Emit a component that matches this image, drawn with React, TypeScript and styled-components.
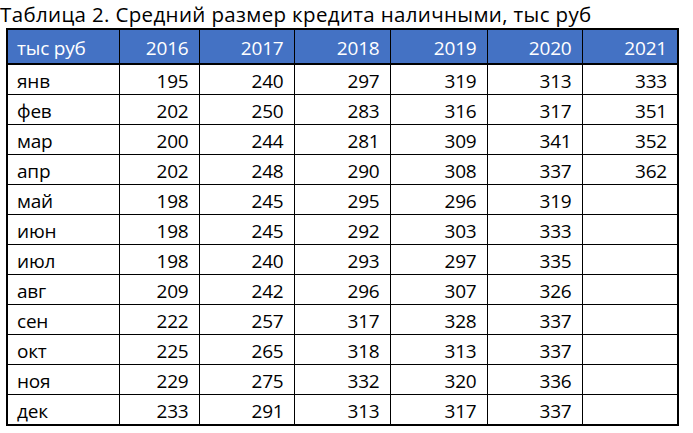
import React from "react";
import styled, { createGlobalStyle } from "styled-components";

const GlobalStyle = createGlobalStyle`
  html, body {
    margin: 0;
    padding: 0;
    background: #ffffff;
  }
  body {
    font-family: "Open Sans", "Noto Sans", sans-serif;
    color: #000;
  }
`;

const years = ["2016", "2017", "2018", "2019", "2020", "2021"];

const rows: [string, (number | null)[]][] = [
  ["янв", [195, 240, 297, 319, 313, 333]],
  ["фев", [202, 250, 283, 316, 317, 351]],
  ["мар", [200, 244, 281, 309, 341, 352]],
  ["апр", [202, 248, 290, 308, 337, 362]],
  ["май", [198, 245, 295, 296, 319, null]],
  ["июн", [198, 245, 292, 303, 333, null]],
  ["июл", [198, 240, 293, 297, 335, null]],
  ["авг", [209, 242, 296, 307, 326, null]],
  ["сен", [222, 257, 317, 328, 337, null]],
  ["окт", [225, 265, 318, 313, 337, null]],
  ["ноя", [229, 275, 332, 320, 336, null]],
  ["дек", [233, 291, 313, 317, 337, null]],
];

const colWidths = [112, 80, 95, 96, 97, 95, 96];

function App() {
  return (
    <Page>
      <GlobalStyle />
      <Title>Таблица 2. Средний размер кредита наличными, тыс руб</Title>
      <Table>
        <colgroup>
          {colWidths.map((w, i) => (
            <col key={i} style={{ width: w }} />
          ))}
        </colgroup>
        <thead>
          <tr>
            <HeadCell $left>тыс руб</HeadCell>
            {years.map((y) => (
              <HeadCell key={y}>{y}</HeadCell>
            ))}
          </tr>
        </thead>
        <tbody>
          {rows.map(([month, vals]) => (
            <Row key={month}>
              <Cell $left>{month}</Cell>
              {vals.map((v, i) => (
                <Cell key={i}>{v ?? ""}</Cell>
              ))}
            </Row>
          ))}
        </tbody>
      </Table>
    </Page>
  );
}

export default App;

const Page = styled.div`
  padding: 0 0 0 6px;
  width: 693px;
  height: 433px;
  box-sizing: border-box;
`;

const Title = styled.div`
  font-size: 20.5px;
  line-height: 28px;
  height: 28px;
  margin-left: -6px;
  white-space: nowrap;
  letter-spacing: 0.35px;
`;

const Table = styled.table`
  border-collapse: collapse;
  table-layout: fixed;
  width: 672px;
  border: 2px solid #000;
  font-size: 19px;
  letter-spacing: -0.2px;
`;

const HeadCell = styled.th<{ $left?: boolean }>`
  background: #4472c4;
  color: #ffffff;
  font-weight: 400;
  height: 31px;
  padding: 2px 10px 0 9px;
  text-align: ${(p) => (p.$left ? "left" : "right")};
  border-left: 1px solid #000;
  border-bottom: 2px solid #000;
`;

const Row = styled.tr`
  height: 30px;
`;

const Cell = styled.td<{ $left?: boolean }>`
  padding: 3px 10px 0 9px;
  line-height: 26px;
  text-align: ${(p) => (p.$left ? "left" : "right")};
  border: 1px solid #000;
`;
